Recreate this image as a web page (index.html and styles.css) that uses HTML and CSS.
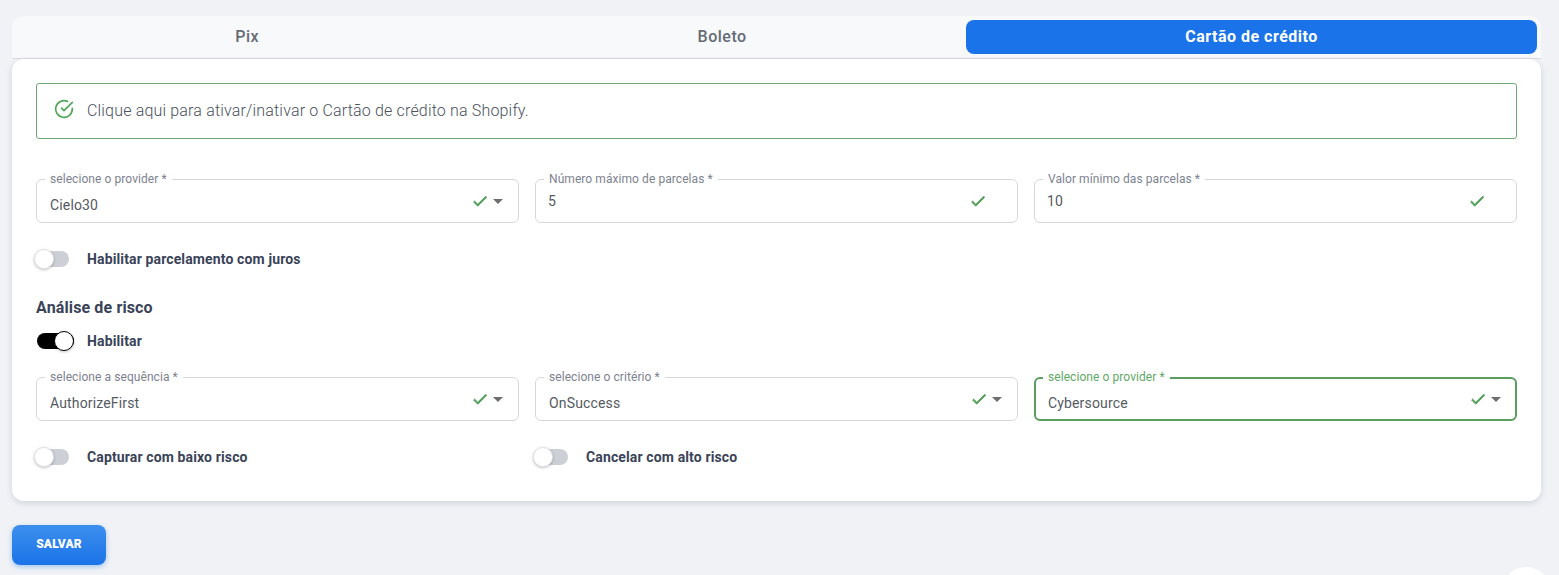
FILE: index.html
```html
<!DOCTYPE html>
<html>
<head>
  <title>Pagamentos</title>
  <link rel="stylesheet" href="styles.css">
</head>
<body>
  <div class="tabs">
    <div class="tab">Pix</div>
    <div class="tab">Boleto</div>
    <div class="tab active">Cartão de crédito</div>
  </div>

  <div class="card">
    <div class="alert">
      <svg class="alert-icon" viewBox="0 0 24 24"><path d="M22 11.08V12a10 10 0 1 1-5.93-9.14"/><path d="M22 4 12 14.01l-3-3"/></svg>
      <span>Clique aqui para ativar/inativar o Cartão de crédito na Shopify.</span>
    </div>

    <div class="fields first">
      <div class="field select">
        <label>selecione o provider *</label>
        <span class="value">Cielo30</span>
        <svg class="check" viewBox="0 0 24 24"><path d="M9 16.17 4.83 12l-1.42 1.41L9 19 21 7l-1.41-1.41z"/></svg>
        <span class="arrow"></span>
      </div>
      <div class="field">
        <label>Número máximo de parcelas *</label>
        <span class="value">5</span>
        <svg class="check" viewBox="0 0 24 24"><path d="M9 16.17 4.83 12l-1.42 1.41L9 19 21 7l-1.41-1.41z"/></svg>
      </div>
      <div class="field">
        <label>Valor mínimo das parcelas *</label>
        <span class="value">10</span>
        <svg class="check" viewBox="0 0 24 24"><path d="M9 16.17 4.83 12l-1.42 1.41L9 19 21 7l-1.41-1.41z"/></svg>
      </div>
    </div>

    <div class="switch-row first-switch">
      <div class="switch-item">
        <span class="switch"></span>
        <span class="switch-label">Habilitar parcelamento com juros</span>
      </div>
    </div>

    <h3>Análise de risco</h3>

    <div class="switch-item enable">
      <span class="switch on"></span>
      <span class="switch-label">Habilitar</span>
    </div>

    <div class="fields second">
      <div class="field select">
        <label>selecione a sequência *</label>
        <span class="value">AuthorizeFirst</span>
        <svg class="check" viewBox="0 0 24 24"><path d="M9 16.17 4.83 12l-1.42 1.41L9 19 21 7l-1.41-1.41z"/></svg>
        <span class="arrow"></span>
      </div>
      <div class="field select">
        <label>selecione o critério *</label>
        <span class="value">OnSuccess</span>
        <svg class="check" viewBox="0 0 24 24"><path d="M9 16.17 4.83 12l-1.42 1.41L9 19 21 7l-1.41-1.41z"/></svg>
        <span class="arrow"></span>
      </div>
      <div class="field select focused">
        <label>selecione o provider *</label>
        <span class="value">Cybersource</span>
        <svg class="check" viewBox="0 0 24 24"><path d="M9 16.17 4.83 12l-1.42 1.41L9 19 21 7l-1.41-1.41z"/></svg>
        <span class="arrow"></span>
      </div>
    </div>

    <div class="switch-row last-switch">
      <div class="switch-item">
        <span class="switch"></span>
        <span class="switch-label">Capturar com baixo risco</span>
      </div>
      <div class="switch-item">
        <span class="switch"></span>
        <span class="switch-label">Cancelar com alto risco</span>
      </div>
    </div>
  </div>

  <button class="save">SALVAR</button>
  <div class="chat"></div>
</body>
</html>
```

FILE: styles.css
```css
html, body {
  height: 100%;
  overflow: hidden;
}

body {
  margin: 0;
  padding: 16px 18px 0 12px;
  box-sizing: border-box;
  background: #f0f2f6;
  font-family: Roboto, 'Liberation Sans', sans-serif;
  color: #3a4358;
}

.tabs {
  display: flex;
  height: 43px;
  padding: 4px 4px 4px;
  box-sizing: border-box;
  background: #f8f9fb;
  border-bottom: 1px solid #d9dce1;
  border-radius: 12px 12px 0 0;
}

.tab {
  flex: 1 1 auto;
  display: flex;
  align-items: center;
  justify-content: center;
  padding-bottom: 2px;
  box-sizing: border-box;
  border-radius: 8px;
  font-size: 16px;
  font-weight: 500;
  letter-spacing: 0.5px;
  color: #656b75;
}

.tab.active {
  background: #1a73e8;
  color: #fff;
  font-weight: 700;
}

.card {
  height: 442px;
  padding: 24px;
  box-sizing: border-box;
  background: #fff;
  border-radius: 12px;
  box-shadow: 0 2px 6px rgba(60, 70, 90, 0.18);
}

.alert {
  display: flex;
  align-items: center;
  height: 56px;
  padding: 0 17px 2px;
  box-sizing: border-box;
  border: 1px solid #6fa873;
  border-radius: 3px;
  font-size: 16px;
  font-weight: 300;
  letter-spacing: 0.17px;
  color: #4a5160;
}

.alert-icon {
  width: 20px;
  height: 20px;
  margin: -3px 13px 0 0;
  fill: none;
  stroke: #4ea657;
  stroke-width: 2;
  stroke-linecap: round;
  stroke-linejoin: round;
}

.fields {
  display: grid;
  grid-template-columns: repeat(3, 1fr);
  gap: 16px;
}

.fields.first {
  margin-top: 40px;
}

.fields.second {
  margin-top: 26px;
}

.field {
  position: relative;
  display: flex;
  align-items: center;
  height: 44px;
  padding: 0 13px;
  box-sizing: border-box;
  border: 1px solid #d5d7db;
  border-radius: 6px;
}

.field label {
  position: absolute;
  top: -7px;
  left: 8px;
  padding: 0 5px;
  background: #fff;
  font-size: 12px;
  line-height: 12px;
  letter-spacing: 0.07px;
  color: #7d8290;
}

.value {
  flex: 1;
  font-size: 14px;
  letter-spacing: 0.15px;
  color: #555a62;
}

.field:not(.select) {
  padding: 0 30px 0 12px;
}

.select .value {
  padding-top: 8px;
}

.check {
  width: 18px;
  height: 18px;
  margin-top: -1px;
  fill: #4f9f57;
  stroke: #4f9f57;
  stroke-width: 1;
}

.arrow {
  width: 0;
  height: 0;
  margin: 0 2px 0 4px;
  border-left: 5px solid transparent;
  border-right: 5px solid transparent;
  border-top: 5px solid #6e6e6e;
}

.field.focused {
  border: 2px solid #5a9e5f;
  padding: 0 12px;
}

.field.focused label {
  top: -8px;
  left: 7px;
  color: #5fa865;
}

.switch-row {
  display: grid;
  grid-template-columns: repeat(3, 1fr);
  gap: 16px;
}

.first-switch {
  margin-top: 26px;
}

.last-switch {
  margin-top: 26px;
}

.switch-item {
  display: flex;
  align-items: center;
  height: 20px;
}

.switch {
  position: relative;
  flex: none;
  width: 33px;
  height: 16px;
  margin-right: 18px;
  background: #ccd0d6;
  border-radius: 8px;
}

.switch::after {
  content: "";
  position: absolute;
  top: -2px;
  left: -2px;
  width: 20px;
  height: 20px;
  box-sizing: border-box;
  background: #fff;
  border: 1px solid #e2e3e6;
  border-radius: 50%;
  box-shadow: 0 1px 3px rgba(0, 0, 0, 0.25);
}

.switch.on {
  width: 37px;
  margin-left: 1px;
  margin-right: 13px;
  background: #000;
}

.switch.on::after {
  left: 17px;
  border: 1px solid #000;
}

.switch-label {
  font-size: 14px;
  font-weight: 700;
  letter-spacing: 0.13px;
  color: #3a4358;
}

h3 {
  margin: 29px 0 0;
  font-size: 16px;
  line-height: 20px;
  font-weight: 700;
  letter-spacing: 0.13px;
  color: #3a4358;
}

.enable {
  margin-top: 13px;
}

.save {
  display: block;
  width: 94px;
  height: 40px;
  margin-top: 24px;
  padding: 0 0 3px;
  border: none;
  border-radius: 8px;
  background: linear-gradient(180deg, #3d8fee 0%, #1a73e8 100%);
  box-shadow: 0 2px 5px rgba(26, 115, 232, 0.35);
  color: #fff;
  font-family: inherit;
  font-size: 12px;
  font-weight: 900;
  letter-spacing: 0.2px;
}

.chat {
  position: fixed;
  right: 9px;
  bottom: -40px;
  width: 48px;
  height: 48px;
  background: #fff;
  border-radius: 50%;
}
```
